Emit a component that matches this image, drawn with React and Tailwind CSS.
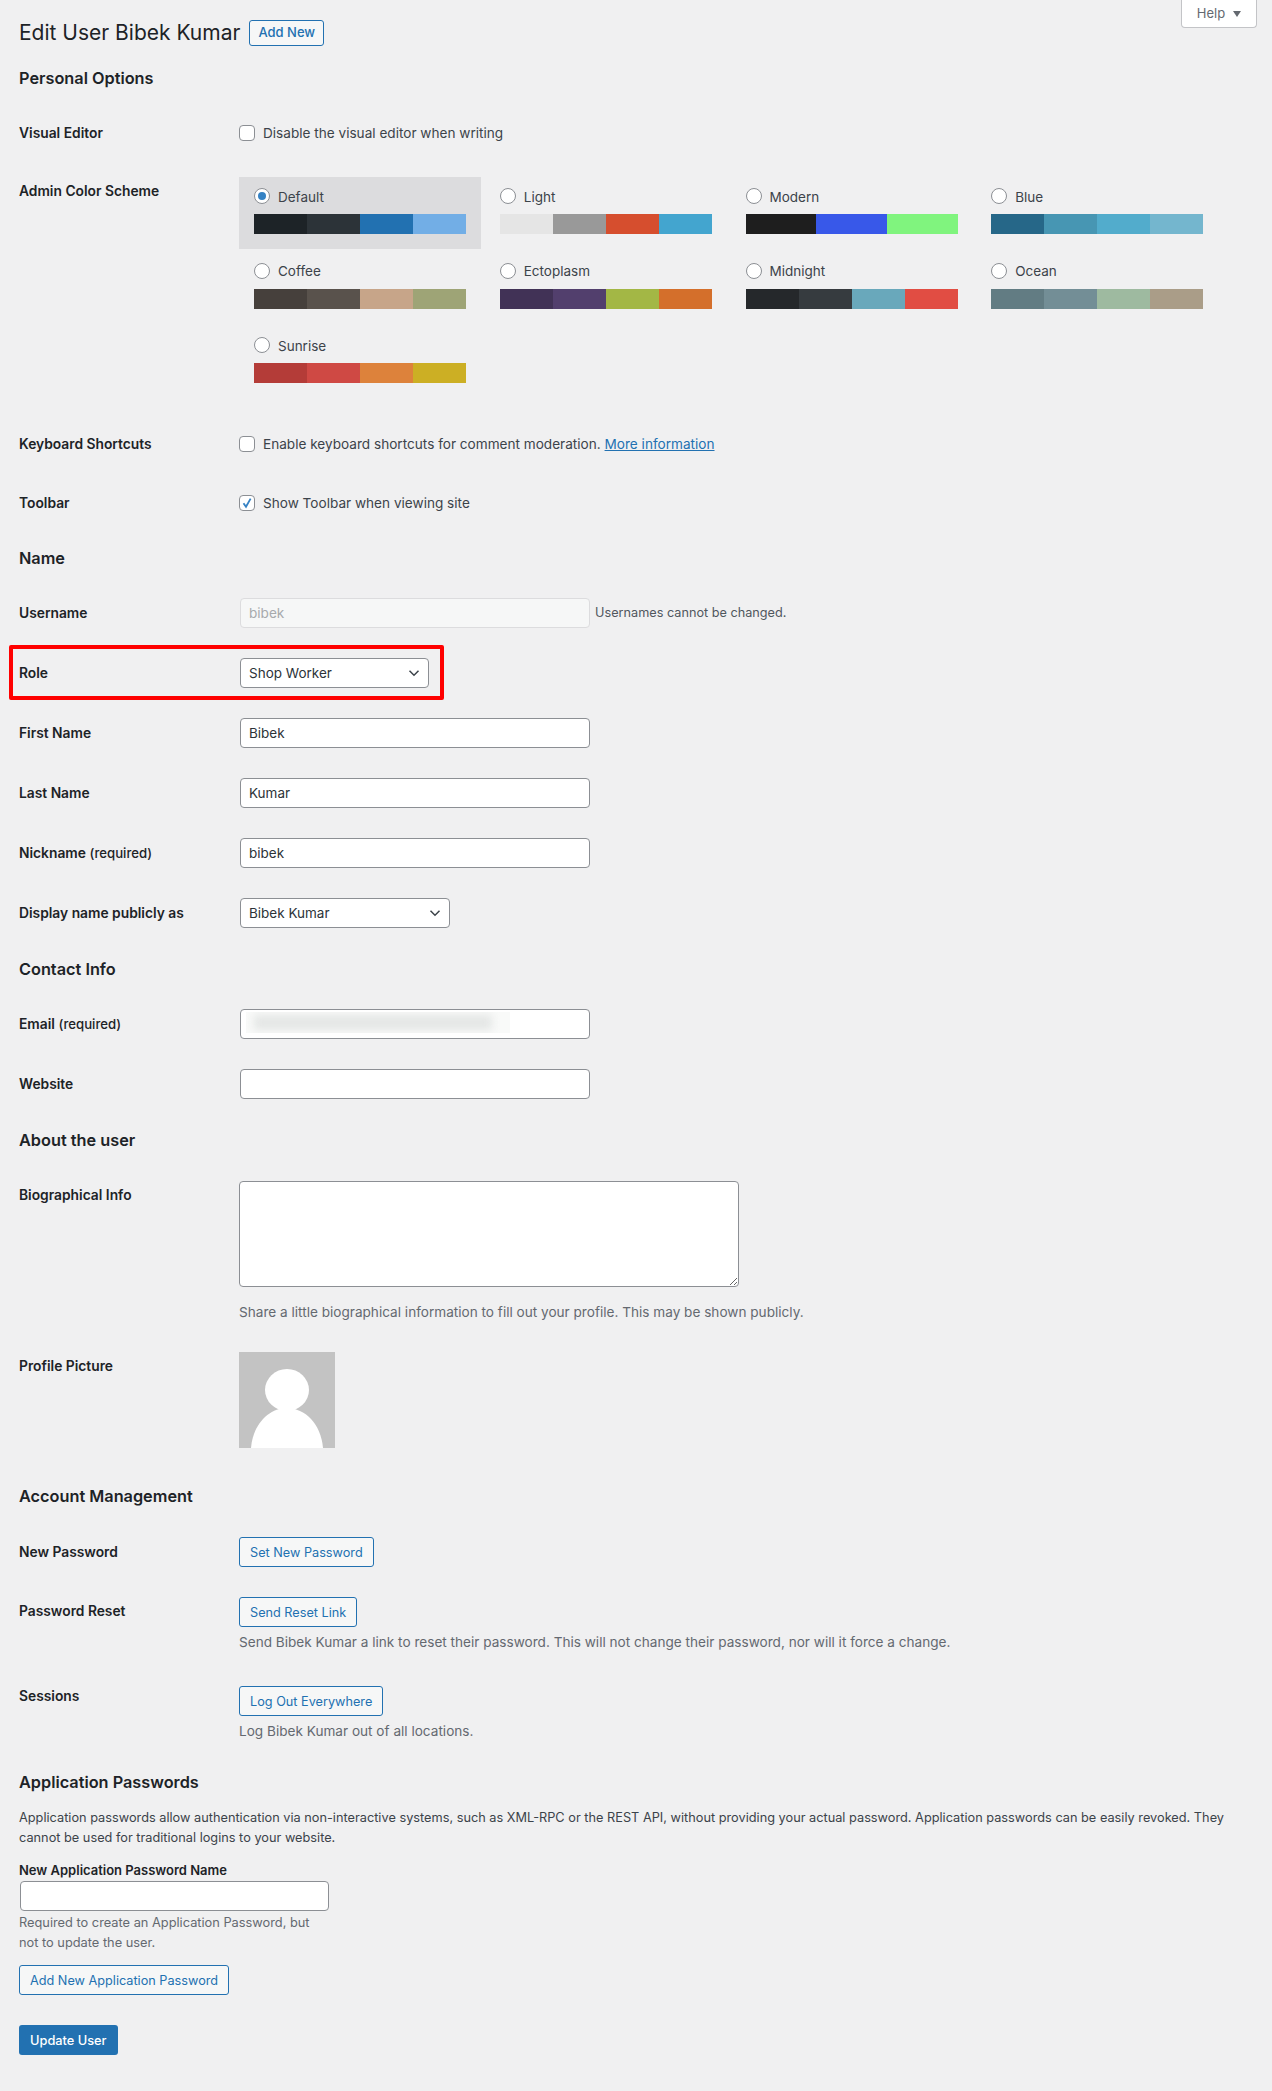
const schemes = [
  { name: "Default", colors: ["#1d2327", "#2c3338", "#2271b1", "#72aee6"], active: true },
  { name: "Light", colors: ["#e5e5e5", "#999999", "#d64e2e", "#43a5cf"] },
  { name: "Modern", colors: ["#1e1e1e", "#3858e9", "#80f47e"] },
  { name: "Blue", colors: ["#266788", "#4796b3", "#52accc", "#74b6ce"] },
  { name: "Coffee", colors: ["#46403c", "#59524c", "#c7a589", "#9ea476"] },
  { name: "Ectoplasm", colors: ["#413256", "#523f6d", "#a3b745", "#d46f2b"] },
  { name: "Midnight", colors: ["#25282b", "#363b3f", "#69a8bb", "#e14d43"] },
  { name: "Ocean", colors: ["#627c83", "#738e96", "#9ebaa0", "#aa9d88"] },
  { name: "Sunrise", colors: ["#b43c38", "#cf4944", "#dd823b", "#ccaf24"] },
];

function Heading({ children, className = "" }) {
  return <h2 className={`text-[16.3px] leading-6 font-semibold text-[#1d2327] ${className}`}>{children}</h2>;
}

function Row({ label, note, className = "", labelClass = "", children }) {
  return (
    <div className={`flex ${className}`}>
      <div className={`w-[220px] shrink-0 text-[13.8px] leading-5 font-semibold text-[#1d2327] ${labelClass}`}>
        {label}
        {note && <span className="text-[13.2px] font-medium"> {note}</span>}
      </div>
      <div className="min-w-0 flex-1">{children}</div>
    </div>
  );
}

function Checkbox({ checked }) {
  return (
    <span className="flex h-4 w-4 shrink-0 items-center justify-center rounded-[4px] border border-[#8c8f94] bg-white">
      {checked && (
        <svg width="14" height="14" viewBox="0 0 14 14" fill="none">
          <path d="M3.5 7.2 6 10.8 10.6 2.6" stroke="#3582c4" strokeWidth="1.8" />
        </svg>
      )}
    </span>
  );
}

function TextBox({ value, className = "w-[350px]", children }) {
  return (
    <div className={`relative flex h-[30px] items-center rounded-[4px] border border-[#8c8f94] bg-white px-2 text-[13.5px] text-[#2c3338] ${className}`}>
      {value}
      {children}
    </div>
  );
}

function SelectBox({ value, className }) {
  return (
    <div className={`flex h-[30px] items-center justify-between rounded-[4px] border border-[#8c8f94] bg-white pl-2 pr-[8px] text-[13.5px] text-[#2c3338] ${className}`}>
      {value}
      <svg width="12" height="12" viewBox="0 0 12 12" fill="none">
        <path d="M1.5 3.8 6 8.2l4.5-4.4" stroke="#3c434a" strokeWidth="1.5" />
      </svg>
    </div>
  );
}

function OutlineButton({ children, className = "" }) {
  return (
    <button className={`flex h-[30px] items-center rounded-[3px] border border-[#2271b1] bg-[#f6f7f7] px-[10px] pt-px text-[12.7px] text-[#2271b1] ${className}`}>
      {children}
    </button>
  );
}

function ColorOption({ scheme }) {
  return (
    <div className={`h-[72px] w-[242px] px-[15px] pt-[11px] ${scheme.active ? "bg-[#dcdcde]" : ""}`}>
      <div className="flex h-4 items-center gap-2">
        <span className="flex h-4 w-4 items-center justify-center rounded-full border border-[#8c8f94] bg-white">
          {scheme.active && <span className="h-2 w-2 rounded-full bg-[#3582c4]" />}
        </span>
        <span className="mt-[2px] text-[13.5px] text-[#3c434a]">{scheme.name}</span>
      </div>
      <div className="mt-[10px] flex h-5 w-[212px]">
        {scheme.colors.map((color) => (
          <span key={color} className="h-full flex-1" style={{ backgroundColor: color }} />
        ))}
      </div>
    </div>
  );
}

export default function App() {
  return (
    <div className="relative min-h-[2091px] bg-[#f0f0f1] pl-[19px] pb-[36px] pt-[20px] font-['Inter',sans-serif] text-[13.6px] text-[#3c434a]">
      <div className="absolute right-[15px] top-0 flex h-[28px] w-[76px] items-center justify-center gap-[8px] rounded-b-[4px] border border-t-0 border-[#c3c4c7] bg-white text-[13px] text-[#646970]">
        Help
        <svg width="8" height="6" viewBox="0 0 8 6">
          <path d="M0 0h8L4 6z" fill="#646970" />
        </svg>
      </div>

      <div className="flex h-[26px] items-center gap-[9px]">
        <h1 className="text-[21px] font-normal text-[#1d2327]">Edit User Bibek Kumar</h1>
        <button className="flex h-[26px] items-center rounded-[3px] border border-[#2271b1] bg-[#f6f7f7] px-2 text-[13px] font-medium text-[#2271b1]">
          Add New
        </button>
      </div>

      <Heading className="mt-[20px]">Personal Options</Heading>

      <Row label="Visual Editor" className="mt-[35px] h-4 items-center">
        <div className="flex h-4 items-center gap-2">
          <Checkbox />
          <span>Disable the visual editor when writing</span>
        </div>
      </Row>

      <Row label="Admin Color Scheme" className="mt-[36px]" labelClass="pt-[4px]">
        <div className="grid grid-cols-[repeat(4,242px)] gap-x-[3.75px] gap-y-[2.5px]">
          {schemes.map((scheme) => (
            <ColorOption key={scheme.name} scheme={scheme} />
          ))}
        </div>
      </Row>

      <Row label="Keyboard Shortcuts" className="mt-[38px] h-4 items-center">
        <div className="flex h-4 items-center gap-2">
          <Checkbox />
          <span>
            Enable keyboard shortcuts for comment moderation.{" "}
            <a href="#" className="text-[#2271b1] underline">More information</a>
          </span>
        </div>
      </Row>

      <Row label="Toolbar" className="mt-[43px] h-4 items-center">
        <div className="flex h-4 items-center gap-2">
          <Checkbox checked />
          <span>Show Toolbar when viewing site</span>
        </div>
      </Row>

      <Heading className="mt-[35px]">Name</Heading>

      <Row label="Username" className="mt-[28px] items-center">
        <div className="flex items-center gap-[5px]">
          <div className="ml-px flex h-[30px] w-[350px] items-center rounded-[4px] border border-[#dcdcde] bg-[#f6f7f7] px-2 text-[#a7aaad]">
            bibek
          </div>
          <span className="text-[12.7px] text-[#50575e]">Usernames cannot be changed.</span>
        </div>
      </Row>

      <Row label="Role" className="relative mt-[30px] items-center">
        <div className="absolute -left-[10px] -top-[13px] h-[55px] w-[435px] rounded-[2px] border-4 border-[#ff0000]" />
        <SelectBox value="Shop Worker" className="ml-px w-[189px]" />
      </Row>

      <Row label="First Name" className="mt-[30px] items-center">
        <TextBox value="Bibek" className="ml-px w-[350px]" />
      </Row>
      <Row label="Last Name" className="mt-[30px] items-center">
        <TextBox value="Kumar" className="ml-px w-[350px]" />
      </Row>
      <Row label="Nickname" note="(required)" className="mt-[30px] items-center">
        <TextBox value="bibek" className="ml-px w-[350px]" />
      </Row>
      <Row label="Display name publicly as" className="mt-[30px] items-center">
        <SelectBox value="Bibek Kumar" className="ml-px w-[210px]" />
      </Row>

      <Heading className="mt-[29px]">Contact Info</Heading>

      <Row label="Email" note="(required)" className="mt-[28px] items-center">
        <TextBox className="ml-px w-[350px]">
          {/* blurred-out address */}
          <div className="absolute left-[5px] top-[2px] h-[21px] w-[264px] overflow-hidden bg-[#f9faf9]">
            <div className="ml-[8px] mt-[3px] h-[15px] w-[238px] bg-[#e4e6e5] blur-[4px]" />
          </div>
        </TextBox>
      </Row>
      <Row label="Website" className="mt-[30px] items-center">
        <TextBox className="ml-px w-[350px]" />
      </Row>

      <Heading className="mt-[29px]">About the user</Heading>

      <Row label="Biographical Info" className="mt-[29px]" labelClass="pt-[4px]">
        <textarea className="block h-[106px] w-[500px] rounded-[4px] border border-[#8c8f94] bg-white" />
        <p className="mt-[15px] leading-5 text-[#646970]">
          Share a little biographical information to fill out your profile. This may be shown publicly.
        </p>
      </Row>

      <Row label="Profile Picture" className="mt-[30px]" labelClass="pt-[4px]">
        <svg width="96" height="96" viewBox="0 0 96 96" className="block">
          <rect width="96" height="96" fill="#c3c3c3" />
          <ellipse cx="48" cy="38" rx="22" ry="21" fill="#fff" />
          <path d="M12 96C14 72 30 56 48 56s34 16 36 40z" fill="#fff" />
        </svg>
      </Row>

      <Heading className="mt-[36px]">Account Management</Heading>

      <Row label="New Password" className="mt-[29px] items-center">
        <OutlineButton className="w-fit">Set New Password</OutlineButton>
      </Row>

      <Row label="Password Reset" className="mt-[30px]" labelClass="pt-[4px]">
        <OutlineButton>Send Reset Link</OutlineButton>
        <p className="mt-[5px] leading-5 text-[#646970]">
          Send Bibek Kumar a link to reset their password. This will not change their password, nor will it force a change.
        </p>
      </Row>

      <Row label="Sessions" className="mt-[34px]">
        <OutlineButton>Log Out Everywhere</OutlineButton>
        <p className="mt-[5px] leading-5 text-[#646970]">Log Bibek Kumar out of all locations.</p>
      </Row>

      <Heading className="mt-[29px]">Application Passwords</Heading>

      <p className="mt-[14px] w-[1225px] text-[12.75px] leading-5">
        Application passwords allow authentication via non-interactive systems, such as XML-RPC or the REST API, without providing your actual password. Application passwords can be easily revoked. They cannot be used for traditional logins to your website.
      </p>

      <label className="mt-[12px] block text-[13px] leading-5 font-semibold text-[#1d2327]">New Application Password Name</label>
      <input className="mt-px ml-px block h-[30px] w-[309px] rounded-[4px] border border-[#8c8f94] bg-white" />
      <p className="mt-[2px] w-[310px] text-[12.8px] leading-5 text-[#646970]">
        Required to create an Application Password, but not to update the user.
      </p>
      <OutlineButton className="mt-[12px]">Add New Application Password</OutlineButton>

      <button className="mt-[30px] flex h-[30px] items-center rounded-[3px] bg-[#2271b1] px-[11px] pt-px text-[12.8px] font-medium text-white">
        Update User
      </button>
    </div>
  );
}
